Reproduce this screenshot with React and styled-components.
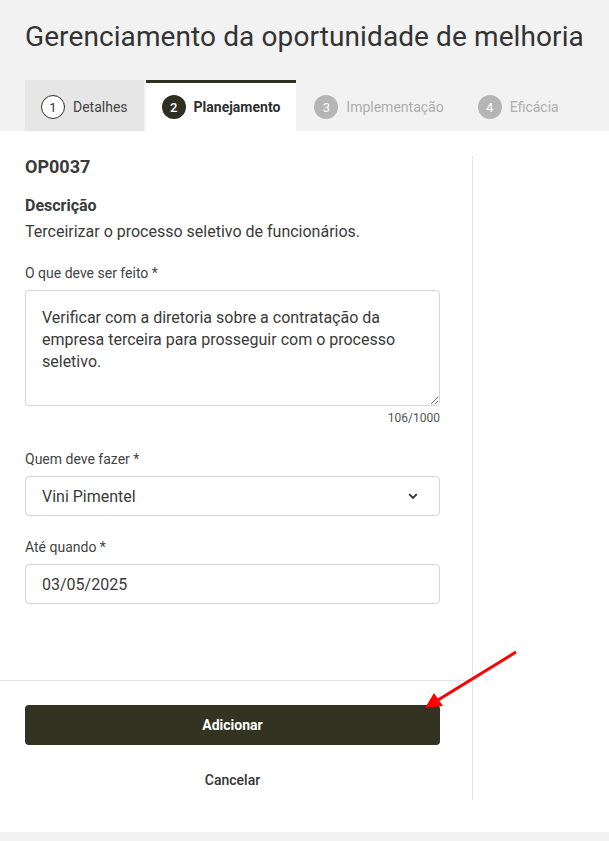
import styled, { createGlobalStyle } from "styled-components";

const GlobalStyle = createGlobalStyle`
  html, body {
    margin: 0;
    background: #f2f2f2;
    font-family: Roboto, "Liberation Sans", sans-serif;
    color: #3a3a3a;
  }
`;

const steps = [
  { n: 1, label: "Detalhes", state: "done" },
  { n: 2, label: "Planejamento", state: "active" },
  { n: 3, label: "Implementação", state: "todo" },
  { n: 4, label: "Eficácia", state: "todo" },
];

export default function App() {
  return (
    <Page>
      <GlobalStyle />
      <Header>
        <Title>Gerenciamento da oportunidade de melhoria</Title>
        <Tabs>
          {steps.map((s) => (
            <Tab key={s.n} $state={s.state}>
              <StepNumber $state={s.state}>{s.n}</StepNumber>
              <TabLabel $state={s.state}>{s.label}</TabLabel>
            </Tab>
          ))}
        </Tabs>
      </Header>

      <Panel>
        <Column>
          <Form>
            <Code>OP0037</Code>
            <SectionTitle>Descrição</SectionTitle>
            <Description>Terceirizar o processo seletivo de funcionários.</Description>

            <Label $top={21}>O que deve ser feito *</Label>
            <TextArea
              defaultValue="Verificar com a diretoria sobre a contratação da empresa terceira para prosseguir com o processo seletivo."
            />
            <Counter>106/1000</Counter>

            <Label $top={24}>Quem deve fazer *</Label>
            <Field>
              <span>Vini Pimentel</span>
              <svg width="10" height="7" viewBox="0 0 10 7">
                <path d="M1.2 1.2 L5 5 L8.8 1.2" fill="none" stroke="#333" strokeWidth="1.9" />
              </svg>
            </Field>

            <Label $top={22}>Até quando *</Label>
            <Field>
              <span>03/05/2025</span>
            </Field>
          </Form>

          <Actions>
            <PrimaryButton>Adicionar</PrimaryButton>
            <LinkButton>Cancelar</LinkButton>
          </Actions>
        </Column>
      </Panel>

      <Arrow width="609" height="841" viewBox="0 0 609 841">
        <line x1="516" y1="652" x2="438" y2="700" stroke="#ff0000" strokeWidth="3" />
        <polygon points="425,708 434,693 443,706" fill="#ff0000" />
      </Arrow>
    </Page>
  );
}

const Page = styled.div`
  position: relative;
  min-height: 841px;
`;

const Header = styled.header`
  padding: 20px 25px 0;
`;

const Title = styled.h1`
  margin: 0;
  font-size: 28px;
  line-height: 34px;
  font-weight: 400;
  color: #333333;
  letter-spacing: 0.1px;
`;

const Tabs = styled.nav`
  display: flex;
  gap: 2px;
  margin-top: 26px;
`;

const Tab = styled.div`
  display: flex;
  align-items: center;
  gap: 8px;
  height: 51px;
  box-sizing: border-box;
  padding: 0 16px;
  background: ${(p) =>
    p.$state === "done" ? "#e6e6e6" : p.$state === "active" ? "#ffffff" : "transparent"};
  border-top: 3px solid ${(p) => (p.$state === "active" ? "#2f2f22" : "transparent")};
`;

const StepNumber = styled.span`
  display: flex;
  align-items: center;
  justify-content: center;
  width: 24px;
  height: 24px;
  box-sizing: border-box;
  border-radius: 50%;
  font-size: 13px;
  ${(p) =>
    p.$state === "done"
      ? "background: #fff; border: 1px solid #2f2f22; color: #333;"
      : p.$state === "active"
      ? "background: #2f2f22; color: #fff; font-weight: 500;"
      : "background: #b5b5b5; color: #fff;"}
`;

const TabLabel = styled.span`
  font-size: 14px;
  font-weight: ${(p) => (p.$state === "active" ? 700 : 400)};
  color: ${(p) => (p.$state === "todo" ? "#adadad" : p.$state === "active" ? "#2f2f2f" : "#444")};
`;

const Panel = styled.main`
  display: flex;
  background: #fff;
  padding: 25px 0 32px;
`;

const Column = styled.section`
  width: 472px;
  border-right: 1px solid #e3e3e3;
  display: flex;
  flex-direction: column;
`;

const Form = styled.div`
  display: flex;
  flex-direction: column;
  padding: 0 32px 76px 25px;
  border-bottom: 1px solid #e3e3e3;
`;

const Code = styled.div`
  font-size: 18px;
  line-height: 22px;
  font-weight: 700;
  color: #3a3a3a;
`;

const SectionTitle = styled.div`
  margin-top: 18px;
  font-size: 16px;
  line-height: 20px;
  font-weight: 700;
  color: #3a3a3a;
`;

const Description = styled.p`
  margin: 5px 0 0;
  font-size: 16px;
  line-height: 22px;
  color: #3a3a3a;
`;

const Label = styled.label`
  margin-top: ${(p) => p.$top}px;
  margin-bottom: 8px;
  font-size: 14px;
  line-height: 18px;
  color: #444;
`;

const TextArea = styled.textarea`
  height: 116px;
  box-sizing: border-box;
  padding: 16px 16px;
  border: 1px solid #d6d6d6;
  border-radius: 4px;
  font-family: inherit;
  font-size: 16px;
  line-height: 22px;
  color: #3a3a3a;
  resize: vertical;
  outline: none;
`;

const Counter = styled.div`
  margin-top: 4px;
  text-align: right;
  font-size: 12px;
  line-height: 16px;
  color: #555;
`;

const Field = styled.div`
  display: flex;
  align-items: center;
  justify-content: space-between;
  height: 40px;
  box-sizing: border-box;
  padding: 0 21px 0 16px;
  border: 1px solid #d6d6d6;
  border-radius: 4px;
  font-size: 16px;
  color: #3a3a3a;
`;

const Actions = styled.div`
  display: flex;
  flex-direction: column;
  align-items: stretch;
  padding: 24px 32px 11px 25px;
`;

const PrimaryButton = styled.button`
  height: 40px;
  border: none;
  border-radius: 4px;
  background: #323320;
  color: #fff;
  font-family: inherit;
  font-size: 14px;
  font-weight: 700;
  cursor: pointer;
`;

const LinkButton = styled.button`
  margin-top: 26px;
  height: 18px;
  padding: 0;
  border: none;
  background: none;
  color: #333;
  font-family: inherit;
  font-size: 14px;
  font-weight: 500;
  cursor: pointer;
`;

const Arrow = styled.svg`
  position: absolute;
  left: 0;
  top: 0;
  pointer-events: none;
`;
